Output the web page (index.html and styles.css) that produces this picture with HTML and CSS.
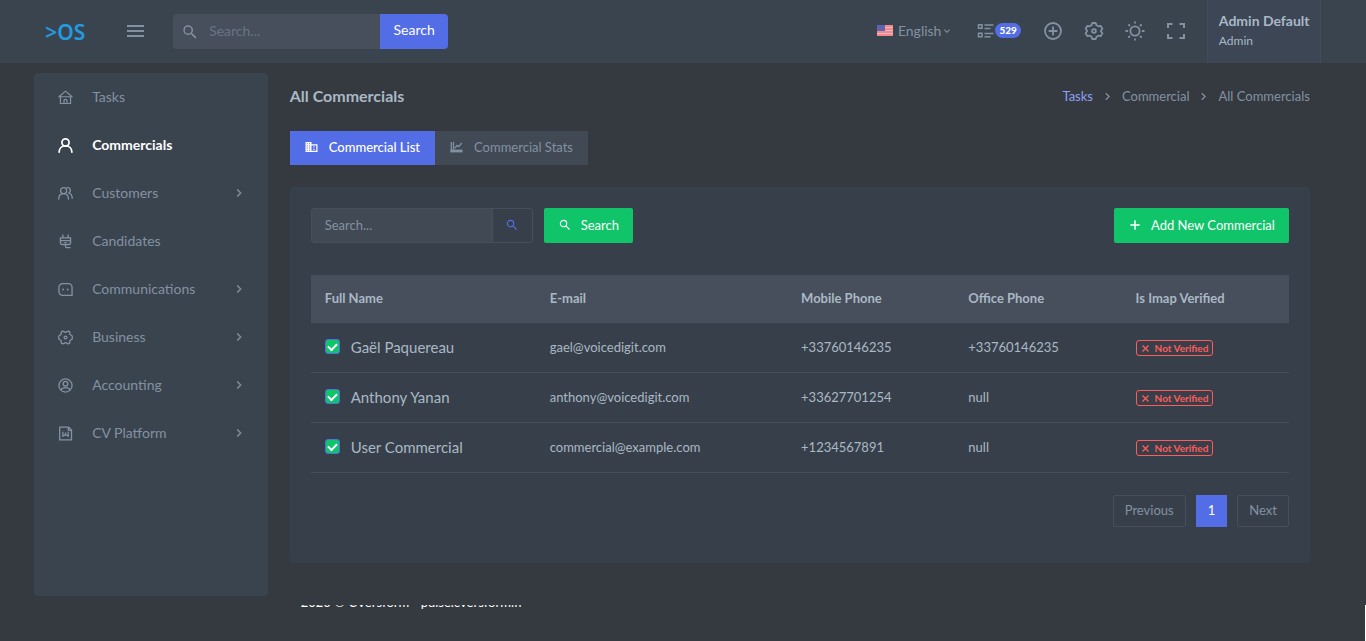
FILE: index.html
```html
<!DOCTYPE html>
<html lang="en">

<head>
    <meta charset="UTF-8">
    <meta name="viewport" content="width=device-width, initial-scale=1.0">
    <title>All Commercials</title>
    <link rel="stylesheet" href="styles.css">
</head>

<body>
    <!-- icon set -->
    <svg class="sprite" aria-hidden="true">
        <symbol id="search" viewBox="0 0 24 24"><path fill="currentColor" d="M9.500 3A6.500 6.500 0 0 1 16 9.500c0 1.610-.590 3.090-1.560 4.230l.270.270h.790l5 5-1.500 1.500-5-5v-.790l-.270-.270A6.500 6.500 0 1 1 9.500 3m0 2a4.500 4.500 0 1 0 0 9 4.500 4.500 0 0 0 0-9z"/></symbol>
        <symbol id="chevron" viewBox="0 0 24 24"><path fill="currentColor" d="M8.590 16.580 13.170 12 8.590 7.410 10 6l6 6-6 6z"/></symbol>
        <symbol id="plus" viewBox="0 0 24 24"><path fill="currentColor" d="M20 13.300h-6.700V20h-2.600v-6.700H4v-2.600h6.700V4h2.600v6.700H20z"/></symbol>
        <symbol id="close" viewBox="0 0 24 24"><path fill="none" stroke="currentColor" stroke-width="3.600" d="m4 4 16 16M20 4 4 20"/></symbol>
        <symbol id="home" viewBox="0 0 16 16"><path fill="none" stroke="currentColor" stroke-width="1.300" stroke-linejoin="round" stroke-linecap="round" d="M1 7.200 8 1.200l7 6H1m1.600 0v7.200h10.800V7.200M6.400 14.200v-2.700a1.600 1.600 0 0 1 3.200 0v2.700"/></symbol>
        <symbol id="user" viewBox="0 0 16 16"><path fill="none" stroke="currentColor" stroke-width="1.900" stroke-linecap="round" d="M1.200 15c0-4 2.900-6.600 6.800-6.600s6.800 2.600 6.800 6.600"/><circle cx="8" cy="4.800" r="3.800" fill="none" stroke="currentColor" stroke-width="1.900"/></symbol>
        <symbol id="users" viewBox="0 0 16 16"><g fill="none" stroke="currentColor" stroke-width="1.400" stroke-linecap="round"><circle cx="6" cy="5" r="3.200"/><path d="M.800 14c0-3.700 2.100-5.800 5.200-5.800s5.200 2.100 5.200 5.800M9.600 1.800c3.400-.600 5 3.400 2 5.600 2.300.900 3.500 3 3.600 5.800"/></g></symbol>
        <symbol id="plug" viewBox="0 0 16 16"><path fill="none" stroke="currentColor" stroke-width="1.400" stroke-linecap="round" stroke-linejoin="round" d="M5.200 1v3.200m5.600-3.200v3.200M2.600 4.200h10.800v5c0 1.200-.800 2-2 2H4.600c-1.200 0-2-.800-2-2zM2.600 7h10.800M7.400 9.200h1.200M8 11.200v2.200c0 .800.500 1.200 1.200 1.200h3.600"/></symbol>
        <symbol id="chat" viewBox="0 0 16 16"><path fill="none" stroke="currentColor" stroke-width="1.400" stroke-linejoin="round" d="M5 1.800h6a4 4 0 0 1 4 4v8.400H5a4 4 0 0 1-4-4V5.800a4 4 0 0 1 4-4z"/><circle cx="5.400" cy="8" r="1" fill="currentColor"/><circle cx="10.400" cy="8" r="1" fill="currentColor"/></symbol>
        <symbol id="cog" viewBox="0 0 16 16"><g fill="none" stroke="currentColor" stroke-width="1.400" stroke-linejoin="round"><path d="M5 1.200 8 2.600l3-1.400 1.600 1-.100 2.400L15.200 6.400v3.200l-2.700 1.800.100 2.400-1.600 1-3-1.400-3 1.400-1.600-1 .100-2.400L.800 9.600V6.400l2.700-1.800-.100-2.400z"/><circle cx="8" cy="8" r="1.500"/></g></symbol>
        <symbol id="account" viewBox="0 0 16 16"><g fill="none" stroke="currentColor" stroke-width="1.400"><circle cx="8" cy="8" r="7"/><circle cx="8" cy="6" r="2.500"/><path d="M3 12.800c1-2 2.700-2.500 5-2.500s4 .500 5 2.500"/></g></symbol>
        <symbol id="file" viewBox="0 0 16 16"><path fill="none" stroke="currentColor" stroke-width="1.400" stroke-linejoin="round" d="M1.800 1.200h9.600l3 3v10.600H1.800zM11 1.200v3.400h3.400M5.200 6v5L8 9.200l2.800 1.800V6M8 7v2"/></symbol>
        <symbol id="gear" viewBox="0 0 20 20"><g fill="none" stroke="currentColor" stroke-width="1.800" stroke-linejoin="round"><path d="M8.300 2h3.400l.900 2.300 1.700 1 2.400-.400 1.700 2.900-1.500 1.900v.600l1.500 1.900-1.700 2.900-2.400-.400-1.700 1-.900 2.300H8.300l-.900-2.300-1.700-1-2.400.400-1.700-2.900 1.500-1.900v-.600L1.600 7.800l1.700-2.900 2.400.400 1.700-1z"/><circle cx="10" cy="10" r="1.900"/></g></symbol>
        <symbol id="circle-plus" viewBox="0 0 20 20"><path fill="none" stroke="currentColor" stroke-width="1.800" d="M10 2a8 8 0 1 1 0 16 8 8 0 0 1 0-16zM10 5.600v8.800M5.600 10h8.800"/></symbol>
        <symbol id="sun" viewBox="0 0 20 20"><g fill="none" stroke="currentColor" stroke-width="1.800" stroke-linecap="round"><circle cx="10" cy="10" r="4.600"/><path d="M10 1.200v.600m0 16.400v.600M1.200 10h1.200m15.200 0h1.200M3.900 3.900l.600.600m11 11 .600.600M16.100 3.900l-.600.600m-11 11-.600.600"/></g></symbol>
        <symbol id="fullscreen" viewBox="0 0 20 20"><path fill="none" stroke="currentColor" stroke-width="2" d="M2 7V3h4.500M13.500 3H18v4M18 13v4h-4.500M6.500 17H2v-4"/></symbol>
        <symbol id="list" viewBox="0 0 16 16"><path fill="none" stroke="currentColor" stroke-width="1.500" d="M1 1.800h3.500v3.500H1zM1 10.200h3.500v3.500H1zM7 2h9M7 5.400h6M7 10.400h9M7 13.800h6"/></symbol>
        <symbol id="building" viewBox="0 0 12 12"><path fill="currentColor" fill-rule="evenodd" d="M0 1h6v2.200h6V11H0zM1.200 2.200v1h1v-1zm2.400 0v1h1v-1zM1.200 4.400v1h1v-1zm2.400 0v1h1v-1zM1.200 6.600v1h1v-1zm2.400 0v1h1v-1zM1.200 8.800v1h1v-1zm2.400 0v1h1v-1zM6 4.400v5.400h4.800V4.400zM7.800 5.400H9v1.200H7.800zm0 2.400H9V9H7.800z"/></symbol>
        <symbol id="chart" viewBox="0 0 12 12"><path fill="none" stroke="currentColor" stroke-width="1.300" d="M.800 1v10.200M3 1v7.800M4.200 7.400l2.400-3 1.600 1.200 3-3.600"/><path fill="currentColor" d="M0 8.600h12v2.800H0z"/></symbol>
    </svg>

    <header class="topbar">
        <div class="container topbar-inner">
            <a href="#" class="logo">&gt;OS</a>
            <button class="menu-toggle" aria-label="Toggle menu"><span></span><span></span><span></span></button>
            <form class="top-search">
                <svg class="icon"><use href="#search"/></svg>
                <input type="text" placeholder="Search..." aria-label="Search">
                <button type="button">Search</button>
            </form>
            <nav class="top-actions">
                <button class="language">
                    <svg class="flag" viewBox="0 0 16 11"><path fill="#f8878b" d="M0 0h16v11H0z"/><path stroke="#e8bcc4" d="M0 2.500h16M0 5.500h16M0 8.500h16"/><path fill="#5f62ac" d="M0 0h8v6H0z"/></svg>
                    English
                    <svg class="caret"><use href="#chevron"/></svg>
                </button>
                <button class="notifications" aria-label="Tasks"><svg class="icon"><use href="#list"/></svg><span class="count">529</span></button>
                <button class="action" aria-label="Add"><svg class="icon"><use href="#circle-plus"/></svg></button>
                <button class="action" aria-label="Settings"><svg class="icon"><use href="#gear"/></svg></button>
                <button class="action" aria-label="Light mode"><svg class="icon"><use href="#sun"/></svg></button>
                <button class="action" aria-label="Fullscreen"><svg class="icon"><use href="#fullscreen"/></svg></button>
            </nav>
            <a href="#" class="profile"><strong>Admin Default</strong><span>Admin</span></a>
        </div>
    </header>

    <div class="container wrapper">
        <aside class="sidebar">
            <a href="#"><svg class="icon"><use href="#home"/></svg>Tasks</a>
            <a href="#" class="active"><svg class="icon"><use href="#user"/></svg>Commercials</a>
            <a href="#"><svg class="icon"><use href="#users"/></svg>Customers<svg class="arrow"><use href="#chevron"/></svg></a>
            <a href="#"><svg class="icon"><use href="#plug"/></svg>Candidates</a>
            <a href="#"><svg class="icon"><use href="#chat"/></svg>Communications<svg class="arrow"><use href="#chevron"/></svg></a>
            <a href="#"><svg class="icon"><use href="#cog"/></svg>Business<svg class="arrow"><use href="#chevron"/></svg></a>
            <a href="#"><svg class="icon"><use href="#account"/></svg>Accounting<svg class="arrow"><use href="#chevron"/></svg></a>
            <a href="#"><svg class="icon"><use href="#file"/></svg>CV Platform<svg class="arrow"><use href="#chevron"/></svg></a>
        </aside>

        <main class="content">
            <div class="page-title">
                <h1>All Commercials</h1>
                <nav class="breadcrumb">
                    <a href="#">Tasks</a>
                    <svg><use href="#chevron"/></svg>
                    <span>Commercial</span>
                    <svg><use href="#chevron"/></svg>
                    <span>All Commercials</span>
                </nav>
            </div>

            <div class="tabs">
                <a href="#" class="active"><svg><use href="#building"/></svg>Commercial List</a>
                <a href="#"><svg><use href="#chart"/></svg>Commercial Stats</a>
            </div>

            <section class="card">
                <div class="toolbar">
                    <div class="input-group">
                        <input type="text" placeholder="Search..." aria-label="Search commercials">
                        <button aria-label="Search"><svg><use href="#search"/></svg></button>
                    </div>
                    <button class="btn"><svg><use href="#search"/></svg>Search</button>
                    <button class="btn btn-add"><svg><use href="#plus"/></svg>Add New Commercial</button>
                </div>

                <table>
                    <thead>
                        <tr>
                            <th class="col-name">Full Name</th>
                            <th class="col-email">E-mail</th>
                            <th>Mobile Phone</th>
                            <th>Office Phone</th>
                            <th>Is Imap Verified</th>
                        </tr>
                    </thead>
                    <tbody>
                        <tr>
                            <td><label><input type="checkbox" checked>Gaël Paquereau</label></td>
                            <td>gael@voicedigit.com</td>
                            <td>+33760146235</td>
                            <td>+33760146235</td>
                            <td><span class="badge"><svg><use href="#close"/></svg>Not Verified</span></td>
                        </tr>
                        <tr>
                            <td><label><input type="checkbox" checked>Anthony Yanan</label></td>
                            <td>anthony@voicedigit.com</td>
                            <td>+33627701254</td>
                            <td>null</td>
                            <td><span class="badge"><svg><use href="#close"/></svg>Not Verified</span></td>
                        </tr>
                        <tr>
                            <td><label><input type="checkbox" checked>User Commercial</label></td>
                            <td>commercial@example.com</td>
                            <td>+1234567891</td>
                            <td>null</td>
                            <td><span class="badge"><svg><use href="#close"/></svg>Not Verified</span></td>
                        </tr>
                    </tbody>
                </table>

                <div class="pagination">
                    <button>Previous</button>
                    <button class="active">1</button>
                    <button>Next</button>
                </div>
            </section>

            <footer class="footer"><span>2020 © CVersform - pulse.cversform.fr</span></footer>
        </main>
    </div>
</body>

</html>
```
FILE: styles.css
```css
* {
    margin: 0;
    padding: 0;
    box-sizing: border-box;
}

body {
    min-height: 100vh;
    background-color: #343a40;
    color: #aab8c5;
    font-family: Lato, "Open Sans", sans-serif;
    font-size: 13px;
    line-height: 20px;
}

/* end of the scroll track */
body::after {
    content: "";
    position: fixed;
    right: 0;
    bottom: 0;
    width: 1px;
    height: 36px;
    background-color: #fff;
}

a {
    color: inherit;
    text-decoration: none;
}

button,
input {
    font: inherit;
    color: inherit;
    background: none;
    border: 0;
}

button {
    cursor: pointer;
}

svg {
    flex-shrink: 0;
}

.sprite {
    display: none;
}

.container {
    width: 95%;
    margin: 0 auto;
}

.topbar {
    background-color: #3a444e;
}

.topbar-inner {
    display: flex;
    align-items: center;
    height: 63px;
    padding: 0 11px;
}

.logo {
    width: 82px;
    color: #239be0;
    font-family: "Noto Sans", sans-serif;
    font-size: 21px;
    font-weight: 600;
}

.menu-toggle {
    display: flex;
    flex-direction: column;
    gap: 3px;
    width: 17px;
    margin-right: 29px;
    padding-bottom: 2px;
}

.menu-toggle span {
    height: 2px;
    background-color: #8391a2;
}

.top-search {
    display: flex;
    align-items: center;
    width: 275px;
    height: 35px;
    overflow: hidden;
    border-radius: 4px;
    background-color: #464f5b;
    font-size: 14px;
}

.top-search .icon {
    width: 18px;
    height: 18px;
    margin: 0 10px 0 8px;
    color: #8391a2;
}

.top-search input {
    flex: 1;
    min-width: 0;
    padding-bottom: 2px;
}

.top-search button {
    width: 68px;
    height: 35px;
    padding-bottom: 3px;
    background-color: #536de6;
    color: #fff;
}

::placeholder {
    color: #8391a2;
    opacity: 1;
}

.top-search ::placeholder {
    color: #687585;
}

.top-actions {
    display: flex;
    align-items: center;
    margin-left: auto;
    padding-bottom: 2px;
    color: #8391a2;
    font-size: 14px;
}

.top-actions button {
    display: flex;
    align-items: center;
}

.action {
    margin-right: 21px;
}

.action .icon {
    width: 20px;
    height: 20px;
}

.language {
    margin-right: 24px;
}

.flag {
    width: 16px;
    height: 11px;
    margin-right: 5px;
}

.caret {
    width: 12px;
    height: 12px;
    transform: rotate(90deg);
}

.notifications {
    margin-right: 22px;
}

.notifications .icon {
    width: 17px;
    height: 16px;
    margin-right: 1px;
}

.count {
    padding: 0 4px;
    border-radius: 8px;
    background-color: #536de6;
    color: #fff;
    font-size: 10px;
    font-weight: 900;
    line-height: 15px;
}

.profile {
    display: flex;
    flex-direction: column;
    justify-content: center;
    align-self: stretch;
    min-width: 114px;
    padding: 0 10px 2px 11px;
    border: solid #414d5d;
    border-width: 0 1px;
    background-color: #3c4655;
    font-size: 12px;
}

.profile strong {
    font-size: 14px;
}

.wrapper {
    display: flex;
    align-items: flex-start;
    padding-top: 10px;
}

.sidebar {
    width: 18%;
    min-height: 523px;
    border-radius: 4px;
    background-color: #3a444e;
    color: #8391a2;
    font-size: 14px;
}

.sidebar a {
    display: flex;
    align-items: center;
    height: 48px;
    padding: 0 21px 0 24px;
}

.sidebar .icon {
    width: 15px;
    height: 15px;
    margin-right: 19px;
}

.sidebar .active {
    color: #fff;
    font-weight: 700;
}

.arrow {
    width: 16px;
    height: 16px;
    margin-left: auto;
}

.content {
    flex: 1;
    padding: 0 22px;
}

.page-title {
    display: flex;
    justify-content: space-between;
    align-items: center;
    height: 46px;
    margin-bottom: 12px;
}

h1 {
    font-size: 16px;
}

.breadcrumb {
    display: flex;
    align-items: center;
    gap: 7px;
    color: #8391a2;
}

.breadcrumb a {
    color: #8fa0f5;
}

.breadcrumb svg {
    width: 15px;
    height: 15px;
}

.tabs {
    display: flex;
    margin-bottom: 22px;
}

.tabs a {
    display: flex;
    align-items: center;
    height: 34px;
    padding: 0 15px 2px;
    background-color: #404954;
    color: #8391a2;
}

.tabs svg {
    width: 13px;
    height: 12px;
    margin-right: 11px;
}

.tabs .active {
    background-color: #536de6;
    color: #fff;
    font-weight: 500;
}

.card {
    padding: 21px 21px 36px;
    border-radius: 4px;
    background-color: #37404a;
}

.toolbar {
    display: flex;
    margin-bottom: 32px;
}

.input-group {
    display: flex;
    width: 222px;
    height: 35px;
    margin-right: 11px;
    border: 1px solid #464f5b;
    border-radius: 3px;
}

.input-group input {
    flex: 1;
    min-width: 0;
    padding: 0 13px 2px;
    background-color: #404954;
}

.input-group button {
    display: flex;
    justify-content: center;
    align-items: center;
    width: 40px;
    padding-bottom: 2px;
    border-left: 1px solid #464f5b;
    color: #536de6;
}

.input-group svg,
.btn svg {
    width: 14px;
    height: 14px;
}

.btn {
    display: flex;
    align-items: center;
    gap: 9px;
    height: 35px;
    padding: 0 14px 2px;
    border-radius: 2px;
    background-color: #10c469;
    color: #fff;
}

.btn-add {
    margin-left: auto;
}

table {
    width: 100%;
    table-layout: fixed;
    border-spacing: 0;
}

th,
td {
    padding: 0 14px 2px;
    text-align: left;
}

th {
    height: 48px;
    background-color: #464f5b;
}

td {
    height: 50px;
    border-bottom: 1px solid #464f5b;
}

.col-name {
    width: 23%;
}

.col-email {
    width: 25.7%;
}

td label {
    display: flex;
    align-items: center;
    gap: 11px;
    font-size: 15px;
}

td input {
    appearance: none;
    display: flex;
    justify-content: center;
    align-items: center;
    width: 15px;
    height: 15px;
    border: 1px solid #536de6;
    border-radius: 3px;
    background-color: #10c469;
}

/* tick */
td input:checked::before {
    content: "";
    width: 7px;
    height: 4px;
    border: solid #fff;
    border-width: 0 0 2px 2px;
    transform: translateY(-1px) rotate(-45deg);
}

.badge {
    display: inline-flex;
    align-items: center;
    gap: 5px;
    height: 16px;
    padding: 0 4px;
    border: 1px solid #ff5b5b;
    border-radius: 3px;
    color: #ff5b5b;
    font-size: 10px;
    font-weight: 700;
    vertical-align: middle;
}

.badge svg {
    width: 9px;
    height: 9px;
}

.pagination {
    display: flex;
    justify-content: flex-end;
    gap: 10px;
    margin-top: 22px;
    color: #8391a2;
}

.pagination button {
    height: 32px;
    padding: 0 11px 2px;
    border: 1px solid #464f5b;
    border-radius: 2px;
}

.pagination .active {
    border-color: #536de6;
    border-radius: 0;
    background-color: #536de6;
    color: #fff;
}

/* only the lower edge of the line shows */
.footer {
    display: flex;
    align-items: flex-end;
    height: 4px;
    margin-top: 42px;
    padding-left: 11px;
    overflow: hidden;
    color: #fff;
    line-height: 14px;
}
```
